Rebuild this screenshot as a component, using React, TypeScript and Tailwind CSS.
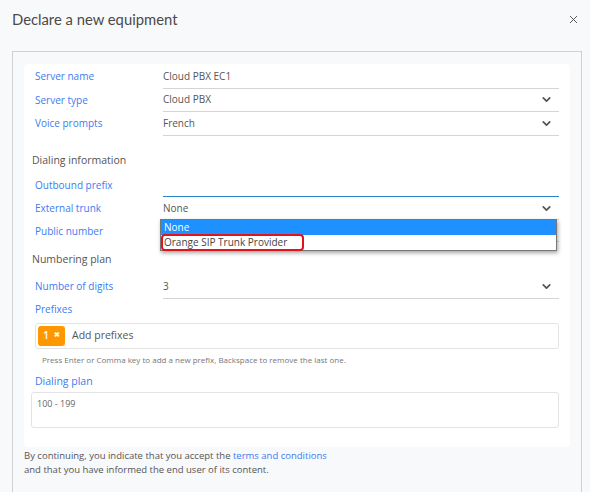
import { ChevronDown, X } from "lucide-react";

const font = { fontFamily: '"Open Sans", "Liberation Sans", sans-serif' };

function Row({
  label,
  value,
  select,
  active,
  line = true,
  h = "h-[23.5px]",
}: {
  label: string;
  value?: string;
  select?: boolean;
  active?: boolean;
  line?: boolean;
  h?: string;
}) {
  return (
    <div className={"flex items-stretch " + h}>
      <div className="flex w-[128px] shrink-0 items-center text-[10px] text-[#3d7cf0]">{label}</div>
      <div
        className={
          "flex flex-1 items-center justify-between text-[10px] text-[#555] " +
          (active ? "border-b border-[#2a86c8]" : line ? "border-b border-[#d4d4d4]" : "")
        }
      >
        <span>{value}</span>
        {select && <ChevronDown size={13} strokeWidth={3.2} className="mr-[6px] text-[#555]" />}
      </div>
    </div>
  );
}

export default function App() {
  return (
    <div className="h-[492px] w-[590px] overflow-hidden bg-[#f8f9fb]" style={font}>
      <div className="flex h-[51px] items-start justify-between px-3 pt-[8px]">
        <h1 className="text-[14.8px] text-[#4a4a4a]" style={{ fontFamily: "Lato, sans-serif" }}>
          Declare a new equipment
        </h1>
        <X size={13} strokeWidth={1.8} className="mr-[-2px] mt-[5px] text-[#555]" />
      </div>

      <div className="mx-3 mr-[8px] border border-b-0 border-[#d0d0d0] px-[11px] pt-[12px]">
        <div className="relative rounded-sm bg-white px-[11px] pb-[19px] pt-[1px]">
          <Row label="Server name" value="Cloud PBX EC1" />
          <Row label="Server type" value="Cloud PBX" select />
          <Row label="Voice prompts" value="French" select />

          <div className="ml-[-3px] mt-[17px] text-[10.5px] text-[#555]">Dialing information</div>
          <div className="mt-[6px]">
            <Row label="Outbound prefix" active h="h-[23px]" />
            <Row label="External trunk" value="None" select h="h-[22.5px]" />
            <Row label="Public number" h="h-[22.5px]" />
          </div>

          <div className="ml-[-3px] mt-[10px] text-[10.5px] text-[#555]">Numbering plan</div>
          <div className="mt-[7px]">
            <Row label="Number of digits" value="3" select />
          </div>

          <div className="mt-[3px] text-[10px] text-[#3d7cf0]">Prefixes</div>
          <div className="mt-[6px] flex h-[26px] items-center rounded-[3px] border border-[#e3e3e3] pl-[2px]">
            <span className="flex h-[20px] w-[27px] items-center justify-center gap-[5px] rounded-[3px] bg-[#ff9800] text-[10px] font-semibold text-white">
              1 <span className="text-[7px]">✖</span>
            </span>
            <span className="ml-[7px] text-[10.5px] text-[#555]">Add prefixes</span>
          </div>
          <div className="ml-[7px] mt-[5px] text-[8px] text-[#777]">
            Press Enter or Comma key to add a new prefix, Backspace to remove the last one.
          </div>

          <div className="mt-[8px] text-[10.5px] text-[#3d7cf0]">Dialing plan</div>
          <div className="ml-[-4px] mt-[3px] h-[36px] rounded-[3px] border border-[#e3e3e3] px-[5px] pt-[4px] text-[9px] text-[#666]">
            100 - 199
          </div>

          {/* open select list */}
          <div className="absolute left-[136px] top-[155px] w-[397px] border border-[#777] bg-white text-[10px] shadow-[1px_2px_4px_rgba(0,0,0,0.35)]">
            <div className="h-[15px] bg-[#1e90ff] pl-[3px] leading-[15px] text-white">None</div>
            <div className="h-[15px] pl-[3px] leading-[15px] text-[#444]">Orange SIP Trunk Provider</div>
          </div>
          <div className="absolute left-[137px] top-[170px] h-[17px] w-[143px] rounded-[4px] border-2 border-[#e3121b]" />
        </div>

        <div className="pb-6 pt-[2px] text-[9.5px] leading-[14px] text-[#555]">
          By continuing, you indicate that you accept the <span className="text-[#3d7cf0]">terms and conditions</span>
          <br />
          and that you have informed the end user of its content.
        </div>
      </div>
    </div>
  );
}
